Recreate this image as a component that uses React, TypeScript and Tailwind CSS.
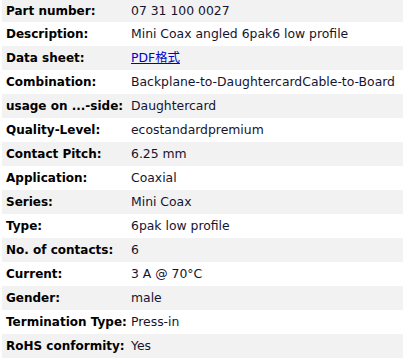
import React from 'react'

type Row = { label: string; value: React.ReactNode }

const rows: Row[] = [
  { label: 'Part number:', value: '07 31 100 0027' },
  { label: 'Description:', value: 'Mini Coax angled 6pak6 low profile' },
  {
    label: 'Data sheet:',
    value: (
      <a href="#" className="text-[#0000cc] underline">
        PDF格式
      </a>
    ),
  },
  { label: 'Combination:', value: 'Backplane-to-DaughtercardCable-to-Board' },
  { label: 'usage on ...-side:', value: 'Daughtercard' },
  { label: 'Quality-Level:', value: 'ecostandardpremium' },
  { label: 'Contact Pitch:', value: '6.25 mm' },
  { label: 'Application:', value: 'Coaxial' },
  { label: 'Series:', value: 'Mini Coax' },
  { label: 'Type:', value: '6pak low profile' },
  { label: 'No. of contacts:', value: '6' },
  { label: 'Current:', value: '3 A @ 70°C' },
  { label: 'Gender:', value: 'male' },
  { label: 'Termination Type:', value: 'Press-in' },
  { label: 'RoHS conformity:', value: 'Yes' },
]

export default function App() {
  return (
    <div className="w-[407px] h-[359px] bg-white pl-[2px] overflow-hidden font-['DejaVu_Sans','Noto_Sans_CJK_SC',sans-serif] text-[12px]">
      {rows.map((r, i) => (
        <div
          key={i}
          className={`flex items-center w-[401px] ${i === 0 ? 'h-[22px]' : 'h-[24px]'} ${
            i % 2 === 0 ? 'bg-[#f2f2f2]' : 'bg-white'
          }`}
        >
          <div className="w-[129px] pl-[4px] font-bold text-black whitespace-nowrap">{r.label}</div>
          <div className="text-[12.4px] text-[#141430] whitespace-nowrap">{r.value}</div>
        </div>
      ))}
    </div>
  )
}
